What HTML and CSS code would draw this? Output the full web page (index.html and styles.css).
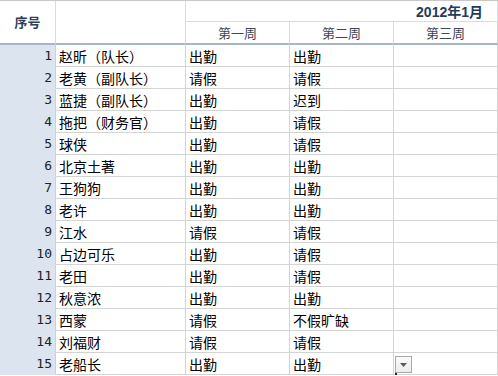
FILE: index.html
```html
<!DOCTYPE html>
<html lang="zh-CN">
<head>
<meta charset="utf-8">
<title>考勤表</title>
<link rel="stylesheet" href="styles.css">
</head>
<body>
<div class="sheet">
  <div class="hd hd-no">序号</div>
  <div class="hd hd-name"></div>
  <div class="hd hd-month">2012年1月</div>
  <div class="hd hd-week">第一周</div>
  <div class="hd hd-week">第二周</div>
  <div class="hd hd-week hd-last">第三周</div>

  <div class="c num">1</div><div class="c">赵昕（队长）</div><div class="c">出勤</div><div class="c">出勤</div><div class="c last"></div>
  <div class="c num">2</div><div class="c">老黄（副队长）</div><div class="c">请假</div><div class="c">请假</div><div class="c last"></div>
  <div class="c num">3</div><div class="c">蓝捷（副队长）</div><div class="c">出勤</div><div class="c">迟到</div><div class="c last"></div>
  <div class="c num">4</div><div class="c">拖把（财务官）</div><div class="c">出勤</div><div class="c">请假</div><div class="c last"></div>
  <div class="c num">5</div><div class="c">球侠</div><div class="c">出勤</div><div class="c">请假</div><div class="c last"></div>
  <div class="c num">6</div><div class="c">北京土著</div><div class="c">出勤</div><div class="c">出勤</div><div class="c last"></div>
  <div class="c num">7</div><div class="c">王狗狗</div><div class="c">出勤</div><div class="c">出勤</div><div class="c last"></div>
  <div class="c num">8</div><div class="c">老许</div><div class="c">出勤</div><div class="c">出勤</div><div class="c last"></div>
  <div class="c num">9</div><div class="c">江水</div><div class="c">请假</div><div class="c">请假</div><div class="c last"></div>
  <div class="c num">10</div><div class="c">占边可乐</div><div class="c">出勤</div><div class="c">请假</div><div class="c last"></div>
  <div class="c num">11</div><div class="c">老田</div><div class="c">出勤</div><div class="c">请假</div><div class="c last"></div>
  <div class="c num">12</div><div class="c">秋意浓</div><div class="c">出勤</div><div class="c">出勤</div><div class="c last"></div>
  <div class="c num">13</div><div class="c">西蒙</div><div class="c">请假</div><div class="c">不假旷缺</div><div class="c last"></div>
  <div class="c num">14</div><div class="c">刘福财</div><div class="c">请假</div><div class="c">请假</div><div class="c last"></div>
  <div class="c num">15</div><div class="c">老船长</div><div class="c">出勤</div><div class="c">出勤</div><div class="c last active"><span class="dd"><svg width="7" height="4" viewBox="0 0 7 4"><path d="M0 0H7L3.5 4Z" fill="#5a5a5a"/></svg></span><span class="dot"></span></div>
</div>
</body>
</html>
```

FILE: styles.css
```css
html, body {
  margin: 0;
  padding: 0;
  background: #ffffff;
}

.sheet {
  display: grid;
  grid-template-columns: 56px 130px 104px 104px 104px;
  grid-template-rows: 21px 23px repeat(15, 22px);
  width: 498px;
  border-top: 1px solid #c8c8c8;
  font-family: "Noto Sans CJK SC", "Noto Sans", sans-serif;
  font-size: 14px;
  color: #000;
}

.hd {
  box-sizing: border-box;
  display: flex;
  align-items: center;
  background: #ffffff;
  border-right: 1px solid #d6dce5;
}

.hd-no {
  grid-row: 1 / span 2;
  grid-column: 1;
  justify-content: center;
  font-weight: bold;
  font-size: 13px;
  color: #2b3f59;
  border-bottom: 2px solid #a3b6cc;
  padding-bottom: 2px;
}

.hd-name {
  grid-row: 1 / span 2;
  grid-column: 2;
  border-bottom: 2px solid #a3b6cc;
}

.hd-month {
  grid-row: 1;
  grid-column: 3 / span 3;
  justify-content: flex-end;
  padding-right: 14px;
  padding-bottom: 1px;
  font-family: "Liberation Sans", "Noto Sans CJK SC", sans-serif;
  font-weight: bold;
  font-size: 14px;
  color: #243b5e;
  border-bottom: 1px solid #d6dce5;
}

.hd-week {
  grid-row: 2;
  justify-content: center;
  font-size: 13px;
  color: #3c4656;
  border-bottom: 2px solid #a3b6cc;
}

.hd-last {
  border-right-color: #d0d0d0;
}

.c {
  box-sizing: border-box;
  display: flex;
  align-items: center;
  padding-left: 3px;
  border-right: 1px solid #d4d4d4;
  border-bottom: 1px solid #d4d4d4;
  white-space: nowrap;
  overflow: hidden;
}

.num {
  justify-content: flex-end;
  padding-left: 0;
  padding-right: 3px;
  background: #dbe4ef;
  border-right-color: #c6d2e0;
  border-bottom-color: #dbe4ef;
  font-family: "DejaVu Sans Mono", "Liberation Mono", monospace;
  font-size: 13px;
  color: #222;
}

.active {
  position: relative;
  overflow: visible;
}

.dd {
  position: absolute;
  left: 1px;
  top: 3px;
  width: 17px;
  height: 17px;
  box-sizing: border-box;
  border: 1px solid #a8a8a8;
  background: linear-gradient(#fbfbfb, #ececec);
  display: flex;
  align-items: center;
  justify-content: center;
}

.dot {
  position: absolute;
  left: 1px;
  top: 20px;
  width: 2px;
  height: 2px;
  background: #222;
}
```
